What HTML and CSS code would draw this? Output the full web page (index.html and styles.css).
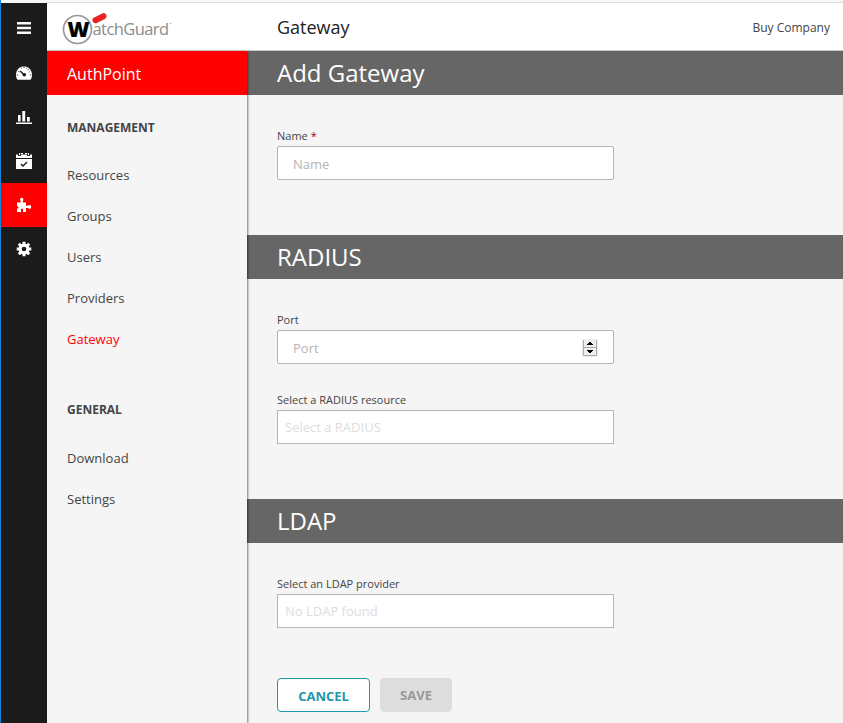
FILE: index.html
```html
<!DOCTYPE html>
<html lang="en">
<head>
<meta charset="utf-8">
<title>Gateway</title>
<link rel="stylesheet" href="styles.css">
</head>
<body>
<div class="app">
  <nav class="rail">
    <a class="rail-item rail-menu"><svg width="16" height="16" viewBox="0 0 16 16"><path d="M1 2h14v2.400H1zM1 6.800h14v2.400H1zM1 11.600h14V14H1z"/></svg></a>
    <a class="rail-item"><svg width="16" height="16" viewBox="0 0 16 16"><path d="M1.500 14.800A8 7.600 0 0 1 0 10C0 5 3.500 1.300 8 1.300S16 5 16 10a8 7.600 0 0 1-1.500 4.800z"/><path class="cut-line" d="M4 6l4 3.500"/><path class="cut-line tick" d="M8 1v2M12.800 4.200l-1 1M.8 10h1.400M13.800 10h1.400M5 2.600l.5 1M11 2.600l-.5 1M2.300 6.300l1 .5M13.700 6.700l-1 .4"/><circle class="cut" cx="8.300" cy="9.800" r="1.800"/></svg></a>
    <a class="rail-item"><svg width="16" height="16" viewBox="0 0 16 16"><path d="M0 13.500h16V15H0zM2 6h2.600v6.500H2zM6.300 2h2.900v10.500H6.300zM11 8h2.700v4.500H11z"/></svg></a>
    <a class="rail-item"><svg width="16" height="18" viewBox="0 0 16 18"><path d="M0 2.500h2V4h3V2.500h6V4h3V2.500h2V6H0zM0 7h16v10H0zM3 1h1.200v2.200H3zM11.800 1H13v2.200h-1.200zM5 1h2v1H5zM9 1h2v1H9z"/><path class="cut-line" d="M5 12l2 2 4-4"/></svg></a>
    <a class="rail-item active"><svg width="16" height="16" viewBox="0 0 16 16"><path d="M1 5.500h3.700V4.300C3.500 2.800 4.200.8 5.700.8S8 2.800 6.900 4.300v1.200H10v3.200h2c.6-1 3.200-1 3.200 1.200s-2.600 2.200-3.200 1.200h-2V15H7v-2c1-1.800-3-1.800-2 0v2H1v-3.500c2 .8 2-3 0-2.200z"/></svg></a>
    <a class="rail-item"><svg width="16" height="16" viewBox="0 0 16 16"><circle cx="8" cy="8" r="5.500"/><path class="teeth" d="M8 .7v14.600M.7 8h14.600M2.800 2.800l10.400 10.400M13.200 2.800L2.800 13.200"/><circle class="cut" cx="8" cy="8" r="2.300"/></svg></a>
  </nav>
  <div class="page">
    <header class="topbar">
      <svg class="logo" width="112" height="36" viewBox="0 0 112 36">
        <circle class="logo-ring" cx="15.500" cy="19.500" r="14"/>
        <text class="logo-w" x="5.500" y="27" textLength="22" lengthAdjust="spacingAndGlyphs">W</text>
        <path class="logo-dash" d="M33.500 10.200l8-4"/>
        <text class="logo-name" x="30.500" y="25" textLength="76.500" lengthAdjust="spacing">atchGuard</text>
        <circle class="logo-mark" cx="108.500" cy="13.500" r=".8"/>
      </svg>
      <h1 class="page-title">Gateway</h1>
      <a class="company">Buy Company</a>
    </header>
    <div class="columns">
      <aside class="sidebar">
        <div class="product">AuthPoint</div>
        <h3 class="group">MANAGEMENT</h3>
        <a class="link">Resources</a>
        <a class="link">Groups</a>
        <a class="link">Users</a>
        <a class="link">Providers</a>
        <a class="link current">Gateway</a>
        <h3 class="group second">GENERAL</h3>
        <a class="link">Download</a>
        <a class="link">Settings</a>
      </aside>
      <main class="content">
        <h2 class="section-title">Add Gateway</h2>
        <section class="fields">
          <label class="label">Name <span class="required">*</span></label>
          <div class="input">Name</div>
        </section>
        <h2 class="section-title">RADIUS</h2>
        <section class="fields">
          <label class="label">Port</label>
          <div class="input">Port
            <svg class="spinner" width="16" height="18" viewBox="0 0 16 18"><path class="spin-bg" d="M0 0h16v18H0z"/><path class="spin-line" d="M1.500 1v15.500h13V1M1 8.500h14"/><path class="spin-arrow" d="M7 3h2v1h1v1h1v1H5V5h1V4h1zM5 11h6v1h-1v1H9v1H7v-1H6v-1H5z"/></svg>
          </div>
          <label class="label next">Select a RADIUS resource</label>
          <div class="input select">Select a RADIUS</div>
        </section>
        <h2 class="section-title">LDAP</h2>
        <section class="fields last">
          <label class="label">Select an LDAP provider</label>
          <div class="input select">No LDAP found</div>
          <div class="actions">
            <button class="button cancel">CANCEL</button>
            <button class="button save" disabled>SAVE</button>
          </div>
        </section>
      </main>
    </div>
  </div>
</div>
</body>
</html>
```
FILE: styles.css
```css
* { box-sizing: border-box; }
body {
  margin: 0;
  height: 723px;
  overflow: hidden;
  font-family: "Open Sans", sans-serif;
  font-size: 13px;
  color: #444;
  background: #f5f5f5;
  border-left: 1px solid #1683d8;
}
.app { display: flex; height: 723px; border-top: 2px solid #f8f8f8; }
.rail { width: 46px; flex: none; background: #1b1b1b; margin-top: 1px; }
.rail-item { display: flex; height: 44px; align-items: center; justify-content: center; }
.rail-menu { height: 48px; padding-top: 1px; }
.rail-item svg { display: block; fill: #fff; --cut: #1b1b1b; }
.rail-item.active { background: #f00; }
.rail-item .cut { fill: var(--cut); }
.rail-item .cut-line { fill: none; stroke: var(--cut); stroke-width: 1.4; }
.rail-item .tick { stroke-width: .8; }
.rail-item .teeth { stroke: #fff; stroke-width: 3; }
.page { flex: 1; min-width: 0; display: flex; flex-direction: column; }
.topbar {
  display: flex;
  align-items: center;
  height: 49px;
  flex: none;
  background: #fff;
  border-top: 1px solid #ddd;
  border-bottom: 1px solid #ccc;
  padding: 0 13px 0 15px;
}
.logo { flex: none; margin-top: 2px; }
.logo-ring { fill: #fff; stroke: #999; stroke-width: 1.7; }
.logo-w { font: 800 21px "Open Sans", sans-serif; fill: #000; stroke: #000; stroke-width: .2; }
.logo-name { font: 16.5px "Open Sans", sans-serif; fill: #8c8c8c; }
.logo-dash { stroke: #ed2024; stroke-width: 6; stroke-linecap: round; }
.logo-mark { fill: #aaa; }
.page-title { margin: 0 0 0 103px; font-size: 18px; font-weight: 400; line-height: 24px; color: #222; }
.company { margin-left: auto; padding-top: 2px; font-size: 12px; }
.columns { flex: 1; display: flex; min-height: 0; }
.sidebar {
  width: 200px;
  flex: none;
  position: relative;
  box-shadow: 1px 1px 2px rgba(0, 0, 0, .5);
  background: #f5f5f5;
}
.product { height: 44px; padding-left: 20px; line-height: 46px; font-size: 16px; color: #fff; background: #f00; }
.group { margin: 23px 0 17px 20px; font-size: 12px; line-height: 20px; font-weight: 700; }
.group.second { margin: 40px 0 18px 20px; }
.link { display: block; height: 41px; line-height: 41px; padding-left: 20px; }
.link.current { color: #f00; }
.content { flex: 1; min-width: 0; }
.section-title {
  margin: 0;
  height: 44px;
  padding-left: 30px;
  line-height: 44px;
  font-size: 24px;
  font-weight: 400;
  color: #fff;
  background: #666;
}
.fields { padding: 33px 30px 55px; }
.fields.last { padding-bottom: 0; }
.label { display: block; height: 18px; line-height: 16px; font-size: 11px; }
.label.next { margin-top: 28px; }
.required { color: #a00; }
.input {
  display: flex;
  align-items: center;
  justify-content: space-between;
  width: 337px;
  height: 34px;
  padding: 1px 15px 0;
  color: #b5b5b5;
  border: 1px solid #b5b5b5;
  border-radius: 2px;
  background: #fff;
}
.input.select { padding: 0 7px; border-radius: 0; color: #ddd; }
.spin-bg { fill: #eee; }
.spin-line { fill: none; stroke: #aaa; }
.spin-arrow { fill: #000; }
.actions { display: flex; gap: 10px; margin-top: 50px; }
.button {
  height: 34px;
  padding: 0;
  border: 1px solid #2097ac;
  border-radius: 4px;
  font: 700 13px "Open Sans", sans-serif;
}
.cancel { width: 93px; padding-top: 1px; color: #2097ac; background: #fff; }
.save { width: 72px; color: #999; background: #ddd; border-color: #ddd; }
```
